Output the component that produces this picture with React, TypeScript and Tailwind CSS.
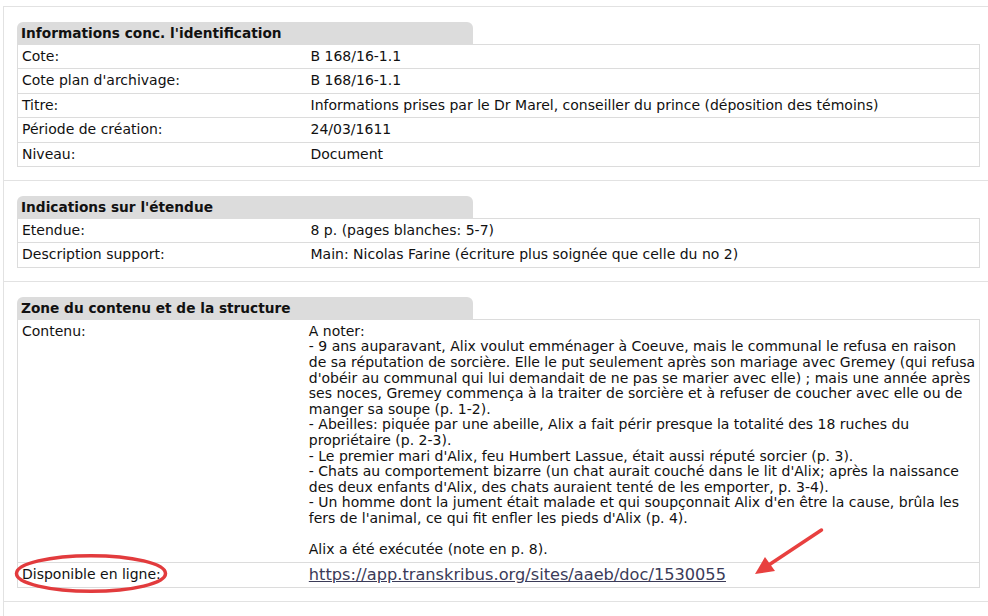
import React from "react";

type Row = { label: string; value: React.ReactNode };

function Section({ title, rows }: { title: string; rows: Row[] }) {
  return (
    <div className="border-t border-l border-[#e2e2e2] pt-[15px] pb-[13px] pl-[13px] pr-[8px]">
      <div className="w-[456px] h-[22px] bg-[#dcdcdc] rounded-t-[6px] px-[4px] font-bold text-[13.7px] leading-[23px] text-[#111]">
        {title}
      </div>
      <table className="w-full border-collapse">
        <tbody>
          {rows.map((r, i) => (
            <tr key={i} className="border border-[#dcdcdc]">
              <td className="w-[289px] px-[4px] py-[4px] align-top leading-[15.4px]">{r.label}</td>
              <td className="px-[4px] py-[4px] align-top leading-[15.4px]">{r.value}</td>
            </tr>
          ))}
        </tbody>
      </table>
    </div>
  );
}

const contenu = [
  "A noter:",
  "- 9 ans auparavant, Alix voulut emménager à Coeuve, mais le communal le refusa en raison",
  "de sa réputation de sorcière. Elle le put seulement après son mariage avec Gremey (qui refusa",
  "d'obéir au communal qui lui demandait de ne pas se marier avec elle) ; mais une année après",
  "ses noces, Gremey commença à la traiter de sorcière et à refuser de coucher avec elle ou de",
  "manger sa soupe (p. 1-2).",
  "- Abeilles: piquée par une abeille, Alix a fait périr presque la totalité des 18 ruches du",
  "propriétaire (p. 2-3).",
  "- Le premier mari d'Alix, feu Humbert Lassue, était aussi réputé sorcier (p. 3).",
  "- Chats au comportement bizarre (un chat aurait couché dans le lit d'Alix; après la naissance",
  "des deux enfants d'Alix, des chats auraient tenté de les emporter, p. 3-4).",
  "- Un homme dont la jument était malade et qui soupçonnait Alix d'en être la cause, brûla les",
  "fers de l'animal, ce qui fit enfler les pieds d'Alix (p. 4).",
  "\u00a0",
  "Alix a été exécutée (note en p. 8).",
];

export default function App() {
  return (
    <div
      className="relative w-[988px] h-[616px] overflow-hidden bg-white pt-[6px] pl-[3px] text-[14px] text-[#111]"
      style={{ fontFamily: '"DejaVu Sans", Verdana, sans-serif' }}
    >
      <Section
        title="Informations conc. l'identification"
        rows={[
          { label: "Cote:", value: "B 168/16-1.1" },
          { label: "Cote plan d'archivage:", value: "B 168/16-1.1" },
          {
            label: "Titre:",
            value: "Informations prises par le Dr Marel, conseiller du prince (déposition des témoins)",
          },
          { label: "Période de création:", value: "24/03/1611" },
          { label: "Niveau:", value: "Document" },
        ]}
      />
      <Section
        title="Indications sur l'étendue"
        rows={[
          { label: "Etendue:", value: "8 p. (pages blanches: 5-7)" },
          {
            label: "Description support:",
            value: "Main: Nicolas Farine (écriture plus soignée que celle du no 2)",
          },
        ]}
      />
      <Section
        title="Zone du contenu et de la structure"
        rows={[
          {
            label: "Contenu:",
            value: (
              <div className="whitespace-nowrap leading-[15.6px]">
                {contenu.map((l, i) => (
                  <div key={i}>{l}</div>
                ))}
              </div>
            ),
          },
          {
            label: "Disponible en ligne:",
            value: (
              <a className="text-[16.2px] leading-[15.5px] text-[#3b3b58] underline">
                https://app.transkribus.org/sites/aaeb/doc/1530055
              </a>
            ),
          },
        ]}
      />
      <div className="border-t border-l border-[#e2e2e2] h-[20px]" />
      <svg className="absolute inset-0 pointer-events-none" width="988" height="616">
        <ellipse cx="91" cy="573.5" rx="74.5" ry="17.8" fill="none" stroke="#e23b3d" strokeWidth="3.5" />
        <line x1="821.5" y1="530" x2="768" y2="565.5" stroke="#e8403f" strokeWidth="3.5" strokeLinecap="round" />
        <polygon points="755,574 765,557 775,571" fill="#e8403f" />
      </svg>
    </div>
  );
}
